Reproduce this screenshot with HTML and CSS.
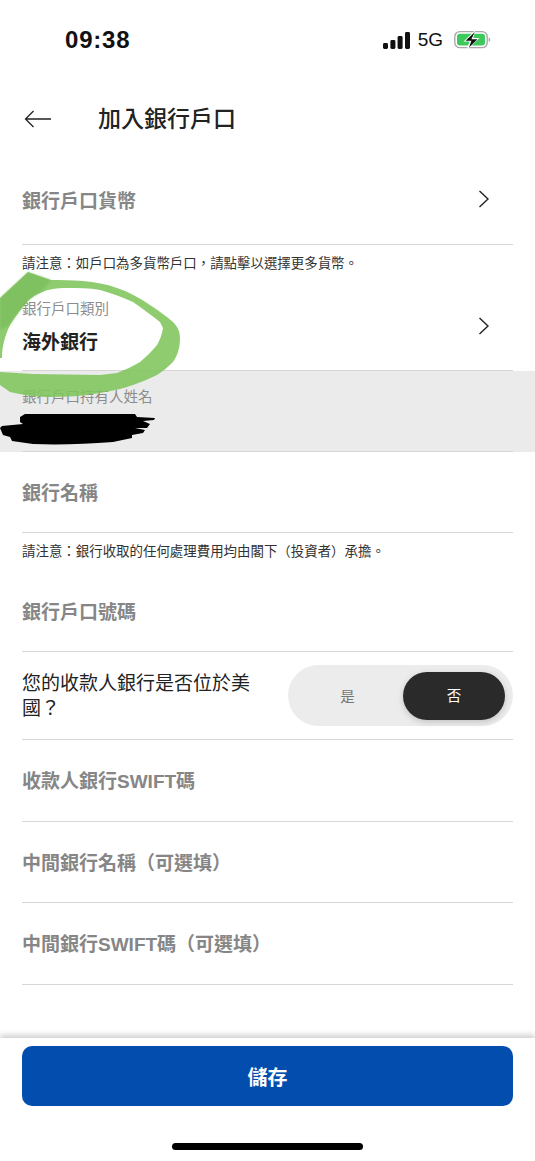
FILE: index.html
```html
<!DOCTYPE html>
<html lang="zh-Hant">
<head>
<meta charset="utf-8">
<title>加入銀行戶口</title>
<link rel="stylesheet" href="styles.css">
</head>
<body>
<div class="screen">
  <div class="status">
    <span class="time">09:38</span>
    <div class="status-right">
      <svg class="signal" width="27" height="17" viewBox="0 0 27 17"><rect x="0" y="11" width="5" height="6" rx="1.4"/><rect x="7.4" y="8" width="5" height="9" rx="1.4"/><rect x="14.6" y="4" width="5" height="13" rx="1.4"/><rect x="22" y="0" width="5" height="17" rx="1.4"/></svg>
      <span class="net">5G</span>
      <svg class="battery" width="37" height="20" viewBox="0 0 37 20"><rect x="0.8" y="1.6" width="32.4" height="16" rx="5" fill="none" stroke="#a9a9a9" stroke-width="1.4"/><rect x="3" y="3.7" width="28" height="11.8" rx="3" fill="#3ec95c"/><path d="M34.6 7.5c1.2.4 1.6 1.2 1.6 2.2s-.4 1.8-1.6 2.2z" fill="#a9a9a9"/><path d="M21.5 0 9.5 11.4h6L12.6 20 25.5 8h-6.2z" fill="#fff"/><path d="M20.8 2 11.6 10.8h5.8l-2.4 6.8 8.4-8.4h-6z" fill="#111"/></svg>
    </div>
  </div>

  <header class="topbar">
    <svg class="back" width="28" height="18" viewBox="0 0 28 18"><path d="M27 9H1.5M9.5 1 1.5 9l8 8" fill="none" stroke="#222" stroke-width="1.3"/></svg>
    <h1 class="title">加入銀行戶口</h1>
  </header>

  <div class="row row-first">
    <span class="placeholder">銀行戶口貨幣</span>
    <svg class="chev" width="12" height="18" viewBox="0 0 12 18"><path d="M1.5 1 10 9l-8.5 8" fill="none" stroke="#222" stroke-width="1.4"/></svg>
  </div>
  <p class="note">請注意：如戶口為多貨幣戶口，請點擊以選擇更多貨幣。</p>

  <div class="row row-type">
    <div class="stack">
      <span class="label">銀行戶口類別</span>
      <span class="value">海外銀行</span>
    </div>
    <svg class="chev" width="12" height="18" viewBox="0 0 12 18"><path d="M1.5 1 10 9l-8.5 8" fill="none" stroke="#222" stroke-width="1.4"/></svg>
  </div>

  <div class="shaded">
    <div class="row row-holder">
      <span class="label">銀行戶口持有人姓名</span>
    </div>
  </div>

  <div class="row row-plain"><span class="placeholder">銀行名稱</span></div>
  <p class="note">請注意：銀行收取的任何處理費用均由閣下（投資者）承擔。</p>
  <div class="row row-account"><span class="placeholder">銀行戶口號碼</span></div>

  <div class="row row-toggle">
    <span class="question">您的收款人銀行是否位於美國？</span>
    <div class="toggle">
      <span class="opt">是</span>
      <span class="opt opt-on">否</span>
    </div>
  </div>

  <div class="row row-tall"><span class="placeholder">收款人銀行SWIFT碼</span></div>
  <div class="row row-plain"><span class="placeholder">中間銀行名稱（可選填）</span></div>
  <div class="row row-tall"><span class="placeholder">中間銀行SWIFT碼（可選填）</span></div>

  <footer class="footer">
    <button class="save" type="button">儲存</button>
    <div class="home"></div>
  </footer>

  <svg class="overlay" width="535" height="460" viewBox="0 0 535 460">
    <path class="ink-green" fill-rule="evenodd" d="M28 272 51 280C62 280 72 280 83 281 95 282 106 284 117 288 129 292 140 298 150 305 158 310 166 316 173 322 178 327 180 332 180 338 180 347 178 355 173 362 168 367 163 371 157 375 149 379 141 382 133 385 122 389 111 391 100 393 83 396 66 397 50 397 36 397 22 395 10 392L0 385V298ZM2 358C2 346 5 336 10 325 15 317 21 309 27 302 31 298 35 295 40 293 48 289 57 288 67 288 78 288 89 288 100 290 111 293 122 297 133 302 142 308 151 315 160 322L163 328C162 334 160 340 157 345 152 351 146 357 140 362 133 366 125 370 117 373L100 375 33 374 0 372V358Z"/>
    <path class="ink-green-over" d="M28 272 51 280 40 293C34 296 30 298 27 302 20 310 14 317 10 325L0 330V298Z"/>
    <path class="ink-black" d="M20 417 25 414H135L137 417 155 418 154 420 143 421 150 424 147 428 135 428 145 430 143 433 132 435 132 438 113 442C85 444 60 445 33 444L12 441 10 437 3 435 0 428 2 426 23 424 20 422Z"/>
  </svg>
</div>
</body>
</html>
```

FILE: styles.css
```css
* { box-sizing: border-box; }
html, body { margin: 0; padding: 0; background: #fff; }
body { font-family: "Liberation Sans", "Noto Sans CJK TC", sans-serif; color: #222; }
.screen { position: relative; width: 535px; height: 1161px; overflow: hidden; }

.status { height: 80px; padding: 0 44px 0 65px; display: flex; align-items: center; justify-content: space-between; }
.time { font-size: 24px; font-weight: 700; color: #111; letter-spacing: 0.8px; }
.status-right { display: flex; align-items: center; gap: 8px; }
.signal { fill: #111; }
.net { font-size: 19px; color: #111; margin-right: 3px; }

.topbar { height: 80px; padding: 0 22px 2px 24px; display: flex; align-items: center; gap: 46px; }
.title { margin: 0; font-size: 23px; line-height: 30px; font-weight: 500; color: #222; }

.row { margin: 0 22px; display: flex; align-items: center; justify-content: space-between; border-bottom: 1px solid #d6d6d6; }
.row-first { height: 85px; padding: 0 23px 6px 0; }
.row-type { height: 89px; padding-right: 23px; }
.row-holder { height: 81px; align-items: flex-start; padding-top: 17px; }
.row-plain { height: 81px; padding-bottom: 2px; }
.row-tall { height: 82px; padding-bottom: 3px; }
.row-account { height: 82px; padding-bottom: 1px; }
.row-toggle { height: 88px; }

.placeholder { font-size: 19px; font-weight: 700; color: #868686; }
.label { font-size: 14.5px; line-height: 18px; color: #8c8c8c; }
.stack { display: flex; flex-direction: column; gap: 12px; padding-top: 3px; }
.value { font-size: 19px; line-height: 26px; font-weight: 700; color: #222; }
.shaded { background: #ebebeb; }

.note { margin: 0 22px; height: 37px; padding-top: 10px; font-size: 13.45px; line-height: 18px; color: #333; white-space: nowrap; }

.question { width: 240px; font-size: 19px; line-height: 25px; color: #222; }
.toggle { width: 225px; height: 61px; border-radius: 31px; background: #ececec; padding: 7px 8px 7px 4px; display: flex; align-items: center; }
.opt { flex: 1; font-size: 14.5px; color: #777; text-align: center; }
.opt-on { flex: 0 0 102px; height: 48px; line-height: 48px; border-radius: 24px; background: #2a2a2a; color: #fff; box-shadow: 0 2px 6px rgba(0,0,0,0.18); }

.footer { position: absolute; left: 0; right: 0; bottom: 0; height: 123px; background: #fff; padding: 8px 22px 0; box-shadow: 0 -3px 6px rgba(0,0,0,0.2); display: flex; flex-direction: column; align-items: center; }
.save { width: 100%; height: 60px; border: 0; border-radius: 10px; background: #024dae; color: #fff; font-family: inherit; font-size: 20px; font-weight: 700; flex: none; }
.home { width: 191px; height: 7px; margin-top: 37px; background: #000; border-radius: 4px; flex: none; }

.overlay { position: absolute; left: 0; top: 0; pointer-events: none; }
.ink-green { fill: #7fc55c; fill-opacity: 0.88; filter: blur(0.7px); }
.ink-green-over { fill: #6fb552; fill-opacity: 0.5; filter: blur(1px); }
.ink-black { fill: #000; filter: blur(0.4px); }
```
